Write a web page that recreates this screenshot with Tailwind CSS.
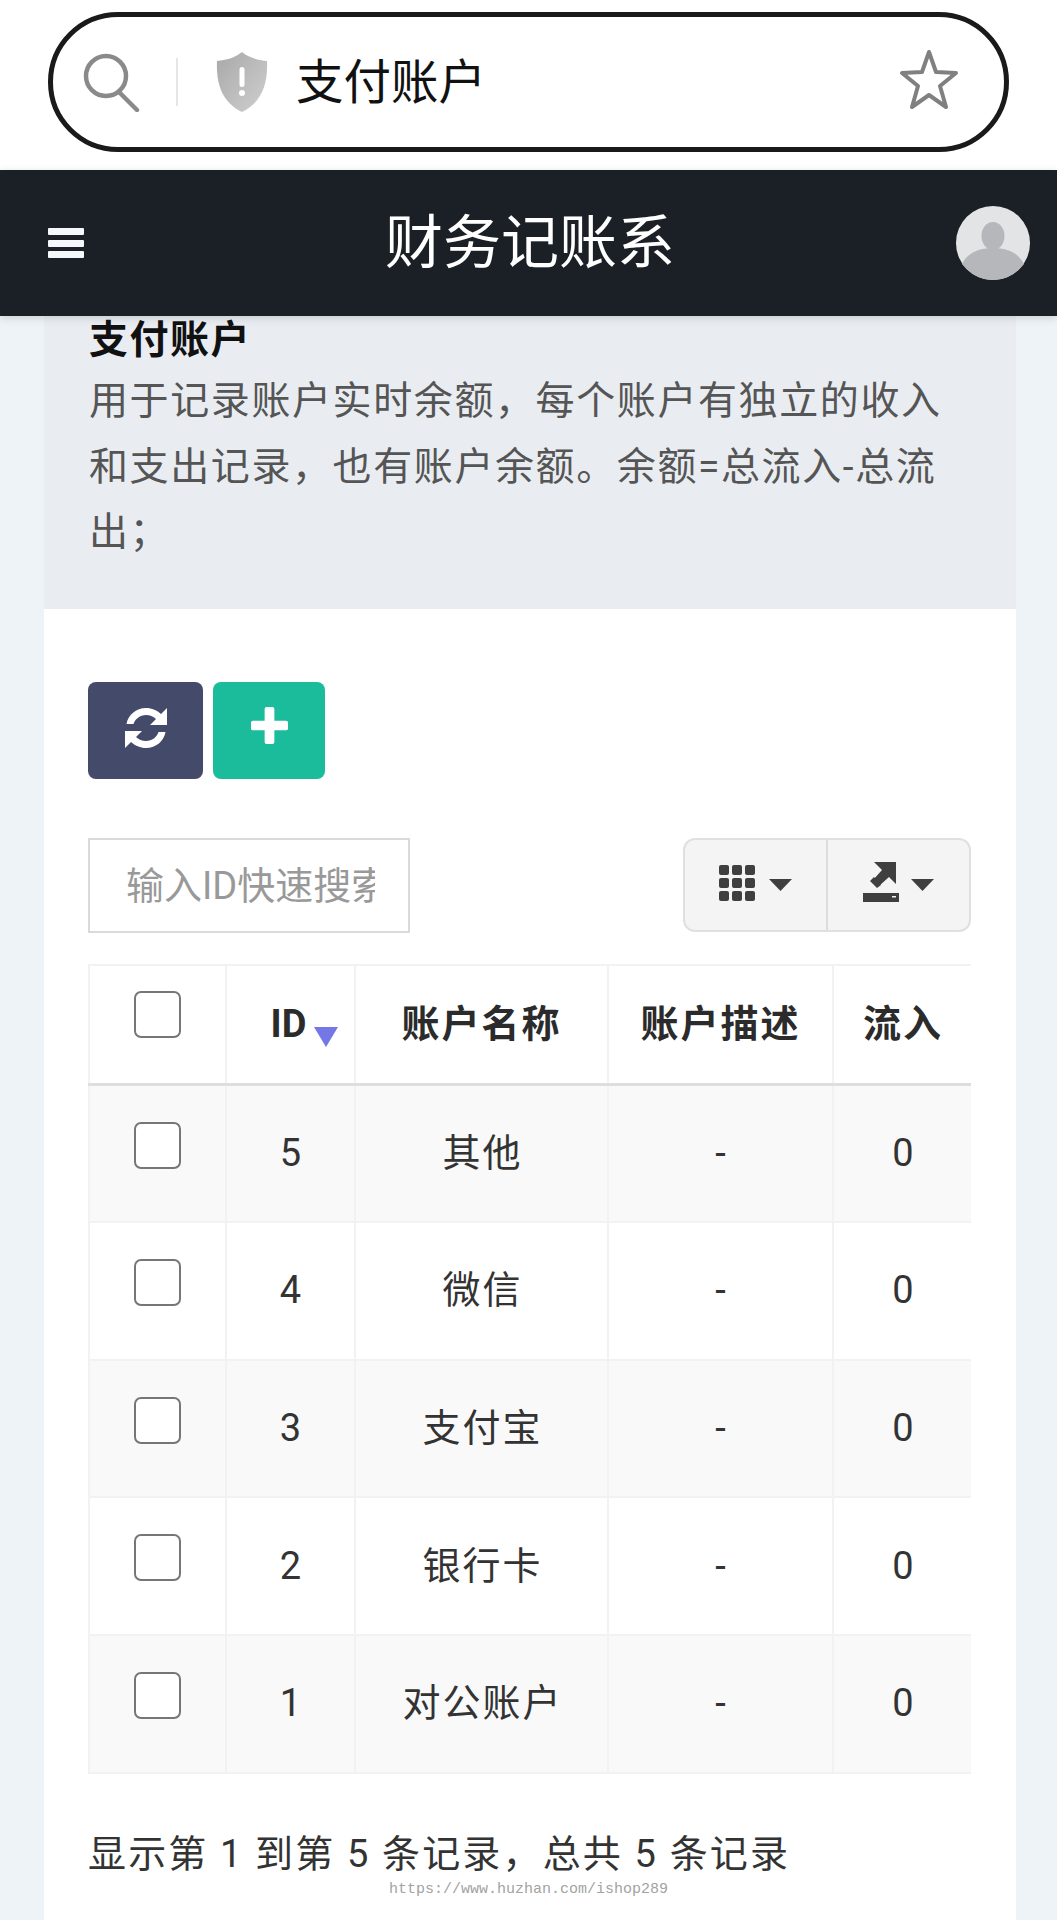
<!DOCTYPE html>
<html lang="zh-CN">
<head>
    <meta charset="UTF-8">
    <meta name="viewport" content="width=device-width, initial-scale=1.0">
    <title>支付账户</title>
    <script src="https://cdn.jsdelivr.net/npm/@tailwindcss/browser@4"></script>
</head>
<body class="bg-[#eef3f7] font-['Roboto','Noto_Sans_CJK_SC',sans-serif] text-[#333]">
<div class="relative h-[1920px] overflow-hidden">

    <!-- browser address bar -->
    <div class="h-[170px] bg-white pl-[48px] pr-[48px] pt-[12px]">
        <div class="flex h-[140px] items-center rounded-[70px] border-[5px] border-[#1a1a1a] pl-[28px] pr-[45px]">
            <svg class="h-[60px] w-[60px] shrink-0" viewBox="0 0 60 60" fill="none" stroke="#8a8a8a" stroke-width="4.5" stroke-linecap="round">
                <circle cx="25" cy="24" r="20"/>
                <path d="M38 40 L56 58"/>
            </svg>
            <div class="ml-[35px] h-[48px] w-[2px] shrink-0 bg-[#e6e6e6]"></div>
            <svg class="ml-[38px] h-[60px] w-[52px] shrink-0" viewBox="0 0 52 60">
                <defs>
                    <linearGradient id="shield" x1="0" y1="0" x2="1" y2="1">
                        <stop offset="0" stop-color="#a8a8a8"/>
                        <stop offset="0.5" stop-color="#bcbcbc"/>
                        <stop offset="1" stop-color="#cfcfcf"/>
                    </linearGradient>
                </defs>
                <path d="M26 0 C33 6 42 8 51 9 C52 32 46 50 26 60 C6 50 0 32 1 9 C10 8 19 6 26 0 Z" fill="url(#shield)"/>
                <rect x="23.5" y="15" width="5" height="20" rx="2.5" fill="#fff"/>
                <circle cx="26" cy="41" r="3" fill="#fff"/>
            </svg>
            <span class="ml-[28px] mt-[4px] text-[47.500px] leading-none text-[#111]">支付账户</span>
            <svg class="ml-auto mb-[5px] h-[60px] w-[60px] shrink-0" viewBox="0 0 60 60" fill="none" stroke="#808080" stroke-width="4" stroke-linejoin="round">
                <path d="M30 2 L37 22 L57 23 L41 36 L47 57 L30 45 L13 57 L19 36 L3 23 L23 22 Z"/>
            </svg>
        </div>
    </div>

    <!-- app header -->
    <header class="relative z-10 grid h-[146px] grid-cols-[1fr_auto_1fr] items-center bg-[#1b2026] pl-[48px] pr-[27px] shadow-[0_2px_8px_rgba(0,0,0,0.15)]">
        <div class="flex w-[36px] flex-col gap-[4.5px]">
            <div class="h-[7px] rounded-[1px] bg-[#f4f8fb]"></div>
            <div class="h-[7px] rounded-[1px] bg-[#f4f8fb]"></div>
            <div class="h-[7px] rounded-[1px] bg-[#f4f8fb]"></div>
        </div>
        <div class="mr-[18px] text-[58px] leading-none text-white">财务记账系</div>
        <svg class="ml-auto h-[74px] w-[74px]" viewBox="0 0 74 74">
            <circle cx="37" cy="37" r="37" fill="#e3e4e6"/>
            <ellipse cx="37" cy="30" rx="11.5" ry="14" fill="#b6b7ba"/>
            <path d="M6 58 C12 46 24 42 37 42 C50 42 62 46 68 58 C60 68 49 74 37 74 C25 74 14 68 6 58 Z" fill="#b6b7ba"/>
        </svg>
    </header>

    <main class="ml-[44px] w-[972px]">
        <!-- description -->
        <section class="h-[293px] bg-[#e9edf1] pl-[45px] pr-[40px] pt-[3px]">
            <h2 class="h-[42px] text-[39px] leading-[42px] font-bold tracking-[1.500px] text-[#111]">支付账户</h2>
            <p class="mt-[8px] text-[39px] leading-[65.5px] tracking-[1.600px] text-[#555]">用于记录账户实时余额，每个账户有独立的收入和支出记录，也有账户余额。余额=总流入-总流出；</p>
        </section>

        <section class="h-[1400px] bg-white pl-[44px] pt-[73px]">
            <!-- toolbar -->
            <div class="flex gap-[10px]">
                <button class="flex h-[97px] w-[115px] items-center justify-center rounded-[8px] bg-[#444a6a] pb-[5px]">
                    <svg class="h-[44px] w-[44px]" viewBox="0 0 44 44" fill="#fff">
                        <path d="M43 2 V19 H26 L32 13 C29 10.500 26 9 22 9 C16 9 11 13 9.500 18 H2.500 C4 9 12 2 22 2 C28 2 33 4.500 37 8 Z"/>
                        <path d="M1 42 V25 H18 L12 31 C15 33.500 18 35 22 35 C28 35 33 31 34.500 26 H41.500 C40 35 32 42 22 42 C16 42 11 39.500 7 36 Z"/>
                    </svg>
                </button>
                <button class="flex h-[97px] w-[112px] items-center justify-center rounded-[8px] bg-[#1abc9c] pb-[10px]">
                    <svg class="h-[37px] w-[37px]" viewBox="0 0 38 38" fill="#fff">
                        <path d="M14 2 a2 2 0 0 1 2 -2 h6 a2 2 0 0 1 2 2 v12 h12 a2 2 0 0 1 2 2 v6 a2 2 0 0 1 -2 2 h-12 v12 a2 2 0 0 1 -2 2 h-6 a2 2 0 0 1 -2 -2 v-12 h-12 a2 2 0 0 1 -2 -2 v-6 a2 2 0 0 1 2 -2 h12 z"/>
                    </svg>
                </button>
            </div>

            <div class="mt-[59px] flex items-start justify-between pr-[45px]">
                <input class="h-[95px] w-[322px] border-[2.500px] border-[#d8dadc] bg-white pl-[36px] pr-[33px] text-[38px] outline-none placeholder:text-[#999]" placeholder="输入ID快速搜索">
                <div class="flex h-[94px] w-[288px] rounded-[12px] border-[2px] border-[#e0e0e0] bg-[#f4f4f4]">
                    <div class="flex w-[143px] items-center justify-center gap-[14px] border-r-[2px] border-[#dcdcdc]">
                        <svg class="mb-[5px] h-[36px] w-[36px]" viewBox="0 0 36 36" fill="#3f3f3f">
                            <rect x="0" y="0" width="10" height="10" rx="2"/><rect x="13" y="0" width="10" height="10" rx="2"/><rect x="26" y="0" width="10" height="10" rx="2"/>
                            <rect x="0" y="13" width="10" height="10" rx="2"/><rect x="13" y="13" width="10" height="10" rx="2"/><rect x="26" y="13" width="10" height="10" rx="2"/>
                            <rect x="0" y="26" width="10" height="10" rx="2"/><rect x="13" y="26" width="10" height="10" rx="2"/><rect x="26" y="26" width="10" height="10" rx="2"/>
                        </svg>
                        <svg class="h-[12px] w-[23px]" viewBox="0 0 23 12" fill="#3f3f3f"><path d="M0 0 H23 L11.500 12 Z"/></svg>
                    </div>
                    <div class="flex flex-1 items-center justify-center gap-[12px]">
                        <svg class="mb-[7px] h-[40px] w-[36px]" viewBox="0 0 36 40" fill="#3f3f3f">
                            <path d="M11 0 H33 V22 L26 15 L16 24 L10 18 L19 8 Z"/>
                            <path d="M7 19 L11 15 L18 23 L14 26 Z"/>
                            <path d="M0 31 H36 V40 H0 Z"/>
                            <rect x="29" y="34" width="4" height="1.500" fill="#f4f4f4"/>
                        </svg>
                        <svg class="h-[12px] w-[23px]" viewBox="0 0 23 12" fill="#3f3f3f"><path d="M0 0 H23 L11.500 12 Z"/></svg>
                    </div>
                </div>
            </div>

            <!-- table -->
            <div class="mt-[31px] w-[883px] overflow-hidden">
                <table class="w-[883px] table-fixed border-collapse text-center text-[38px] tracking-[2px]">
                    <colgroup>
                        <col class="w-[137px]"><col class="w-[129px]"><col class="w-[253px]"><col class="w-[225px]"><col class="w-[139px]">
                    </colgroup>
                    <thead>
                        <tr class="h-[119px] border-t-[2px] border-b-[3px] border-t-[#f2f2f2] border-b-[#dedede] font-bold text-[#2b2b2b]">
                            <th class="border-x-[2px] border-[#f2f2f2] align-top pt-[25px]"><div class="mx-auto h-[47px] w-[47px] rounded-[7px] border-[2px] border-[#767676] bg-white"></div></th>
                            <th class="relative border-x-[2px] border-[#f2f2f2]"><span class="relative left-[-2px] tracking-normal">ID</span><svg class="absolute left-[87px] top-[61px] h-[20px] w-[24px]" viewBox="0 0 24 20" fill="#7477e6"><path d="M0 0 H24 L12 20 Z"/></svg></th>
                            <th class="border-x-[2px] border-[#f2f2f2]">账户名称</th>
                            <th class="border-x-[2px] border-[#f2f2f2]">账户描述</th>
                            <th class="border-l-[2px] border-[#f2f2f2]">流入</th>
                        </tr>
                    </thead>
                    <tbody class="indent-[2px]">
                        <tr class="h-[137.750px] bg-[#f9f9f9] border-b-[2px] border-[#f2f2f2]">
                            <td class="border-x-[2px] border-[#f2f2f2] align-top pt-[36px]"><div class="mx-auto h-[47px] w-[47px] rounded-[7px] border-[2px] border-[#767676] bg-white"></div></td>
                            <td class="border-x-[2px] border-[#f2f2f2]">5</td>
                            <td class="border-x-[2px] border-[#f2f2f2]">其他</td>
                            <td class="border-x-[2px] border-[#f2f2f2]">-</td>
                            <td class="border-l-[2px] border-[#f2f2f2]">0</td>
                        </tr>
                        <tr class="h-[137.750px] bg-white border-b-[2px] border-[#f2f2f2]">
                            <td class="border-x-[2px] border-[#f2f2f2] align-top pt-[36px]"><div class="mx-auto h-[47px] w-[47px] rounded-[7px] border-[2px] border-[#767676] bg-white"></div></td>
                            <td class="border-x-[2px] border-[#f2f2f2]">4</td>
                            <td class="border-x-[2px] border-[#f2f2f2]">微信</td>
                            <td class="border-x-[2px] border-[#f2f2f2]">-</td>
                            <td class="border-l-[2px] border-[#f2f2f2]">0</td>
                        </tr>
                        <tr class="h-[137.750px] bg-[#f9f9f9] border-b-[2px] border-[#f2f2f2]">
                            <td class="border-x-[2px] border-[#f2f2f2] align-top pt-[36px]"><div class="mx-auto h-[47px] w-[47px] rounded-[7px] border-[2px] border-[#767676] bg-white"></div></td>
                            <td class="border-x-[2px] border-[#f2f2f2]">3</td>
                            <td class="border-x-[2px] border-[#f2f2f2]">支付宝</td>
                            <td class="border-x-[2px] border-[#f2f2f2]">-</td>
                            <td class="border-l-[2px] border-[#f2f2f2]">0</td>
                        </tr>
                        <tr class="h-[137.750px] bg-white border-b-[2px] border-[#f2f2f2]">
                            <td class="border-x-[2px] border-[#f2f2f2] align-top pt-[36px]"><div class="mx-auto h-[47px] w-[47px] rounded-[7px] border-[2px] border-[#767676] bg-white"></div></td>
                            <td class="border-x-[2px] border-[#f2f2f2]">2</td>
                            <td class="border-x-[2px] border-[#f2f2f2]">银行卡</td>
                            <td class="border-x-[2px] border-[#f2f2f2]">-</td>
                            <td class="border-l-[2px] border-[#f2f2f2]">0</td>
                        </tr>
                        <tr class="h-[137.750px] bg-[#f9f9f9] border-b-[2px] border-[#f2f2f2]">
                            <td class="border-x-[2px] border-[#f2f2f2] align-top pt-[36px]"><div class="mx-auto h-[47px] w-[47px] rounded-[7px] border-[2px] border-[#767676] bg-white"></div></td>
                            <td class="border-x-[2px] border-[#f2f2f2]">1</td>
                            <td class="border-x-[2px] border-[#f2f2f2]">对公账户</td>
                            <td class="border-x-[2px] border-[#f2f2f2]">-</td>
                            <td class="border-l-[2px] border-[#f2f2f2]">0</td>
                        </tr>
                    </tbody>
                </table>
            </div>

            <p class="mt-[57px] text-[38px] leading-[46px] tracking-[2.150px] text-[#333]">显示第 1 到第 5 条记录，总共 5 条记录</p>
        </section>
    </main>

    <!-- watermark -->
    <div class="absolute left-[389px] top-[1880px] font-['Liberation_Mono',monospace] text-[15px] leading-[20px] text-[#a3a3a3]">https://www.huzhan.com/ishop289</div>
</div>
</body>
</html>
